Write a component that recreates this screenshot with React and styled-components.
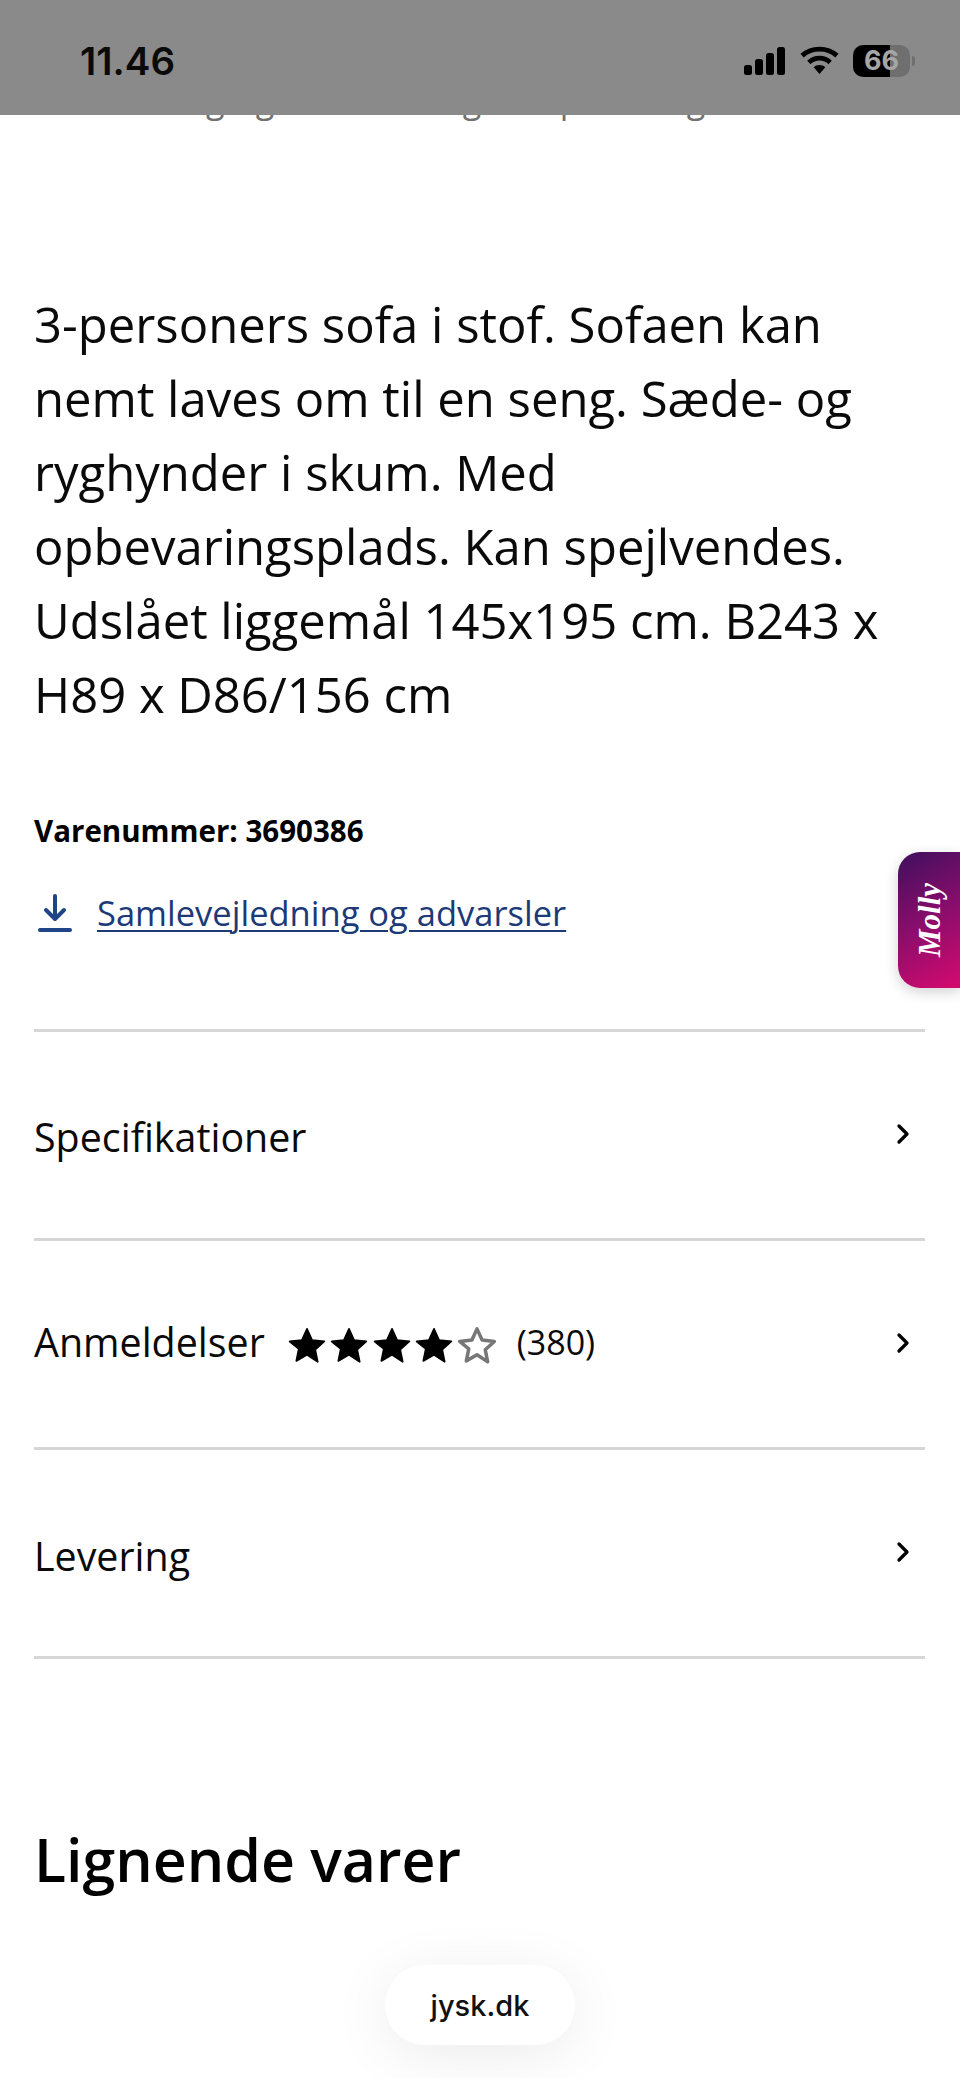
import React from 'react';
import styled, { createGlobalStyle } from 'styled-components';
import { ChevronRight } from 'lucide-react';

const GlobalStyle = createGlobalStyle`
  html, body {
    margin: 0;
    padding: 0;
    background: #fff;
    font-family: 'Open Sans', 'Liberation Sans', sans-serif;
    color: #000;
  }
`;

const Page = styled.div`
  position: relative;
  width: 960px;
  height: 2078px;
  overflow: hidden;
  background: #fff;
`;

const StatusBar = styled.div`
  position: absolute;
  top: 0;
  left: 0;
  right: 0;
  height: 115px;
  background: #8a8a8a;
  display: flex;
  justify-content: space-between;
  align-items: center;
  padding: 6px 45px 0 80px;
  box-sizing: border-box;
`;

const Clock = styled.span`
  font-family: 'Inter', 'Liberation Sans', sans-serif;
  font-size: 38.5px;
  font-weight: 600;
  color: #0a0a0a;
`;

const StatusIcons = styled.div`
  display: flex;
  align-items: center;
  gap: 14px;
`;

const Content = styled.main`
  padding: 0 35px 0 34px;
`;

const ClippedLine = styled.div`
  font-size: 34px;
  line-height: 46px;
  height: 46px;
  margin-top: 77px;
  padding-left: 65px;
  color: #707070;
  word-spacing: 2px;
  white-space: nowrap;
`;

const Description = styled.p`
  margin: 164px 0 0;
  max-width: 865px;
  font-size: 49px;
  line-height: 74px;
  color: #0a0a0a;
`;

const ItemNumber = styled.div`
  margin-top: 80px;
  font-size: 29.5px;
  line-height: 40px;
  font-weight: 700;
`;

const DownloadLink = styled.a`
  display: flex;
  align-items: center;
  gap: 25px;
  margin-top: 39px;
  font-size: 34.5px;
  line-height: 46px;
  color: #1c3a78;
  text-decoration: underline;
  text-decoration-thickness: 2px;
  text-underline-offset: 4px;
`;

const Accordion = styled.div`
  margin-top: 93px;
  border-top: 3px solid #d6d6d6;
`;

const AccordionRow = styled.div`
  display: flex;
  align-items: center;
  justify-content: space-between;
  height: 206px;
  border-bottom: 3px solid #d6d6d6;
  color: #0a0a0a;
  font-size: 39.4px;
`;

const RowLabel = styled.div`
  display: flex;
  align-items: center;
  padding-top: ${({ $drop }) => $drop || 0}px;
  padding-bottom: ${({ $lift }) => $lift || 0}px;
`;

const Stars = styled.div`
  display: flex;
  align-items: center;
  gap: 0.5px;
  margin: 9px 19px 0 21px;
`;

const ReviewCount = styled.span`
  font-size: 34px;
`;

const Arrow = styled(ChevronRight)`
  width: 32px;
  height: 32px;
  stroke-width: 2.5;
  color: #000;
  margin-right: 6px;
  margin-top: -3px;
`;

const SimilarHeading = styled.h2`
  margin: 162px 0 0;
  font-size: 59px;
  line-height: 76px;
  font-weight: 600;
  color: #000;
`;

const MollyTab = styled.div`
  position: absolute;
  top: 852px;
  right: 0;
  width: 62px;
  height: 136px;
  padding-left: 2px;
  box-sizing: border-box;
  border-radius: 22px 0 0 22px;
  background: linear-gradient(150deg, #3f0f5e 0%, #8a0d6c 50%, #d60a6e 100%);
  box-shadow: 0 4px 14px rgba(0, 0, 0, 0.18);
  display: flex;
  align-items: center;
  justify-content: center;
`;

const MollyLabel = styled.span`
  transform: rotate(-90deg);
  color: #fff;
  font-family: 'Liberation Serif', serif;
  font-style: italic;
  font-weight: 700;
  font-size: 31px;
`;

const UrlPill = styled.div`
  position: absolute;
  top: 1965px;
  left: 385px;
  width: 190px;
  height: 80px;
  border-radius: 40px;
  background: #fff;
  box-shadow: 0 10px 60px rgba(0, 0, 0, 0.08);
  display: flex;
  align-items: center;
  justify-content: center;
  font-family: 'Inter', 'Liberation Sans', sans-serif;
  font-size: 29px;
  font-weight: 500;
  color: #111;
`;

const BatteryBody = styled.div`
  width: 57px;
  height: 32px;
  border-radius: 10px;
  overflow: hidden;
  background: linear-gradient(90deg, #000 0 65%, #6f6f6f 65% 100%);
  display: flex;
  align-items: center;
  justify-content: center;
  font-family: 'Inter', 'Liberation Sans', sans-serif;
  font-weight: 700;
  font-size: 27px;
  color: #a6a6a6;
`;

const BatteryCap = styled.div`
  width: 3px;
  height: 10px;
  margin-left: -12px;
  border-radius: 0 3px 3px 0;
  background: #6f6f6f;
`;

function SignalIcon() {
  return (
    <svg width="42" height="28" viewBox="0 0 42 28" fill="#000">
      <rect x="0" y="18" width="8" height="10" rx="2.5" />
      <rect x="11" y="12" width="8" height="16" rx="2.5" />
      <rect x="22" y="6" width="8" height="22" rx="2.5" />
      <rect x="33" y="0" width="8" height="28" rx="2.5" />
    </svg>
  );
}

function WifiIcon() {
  return (
    <svg width="39" height="29" viewBox="0 0 40 30" fill="none" stroke="#000" strokeWidth="5">
      <path d="M2 10 C12 1 28 1 38 10" />
      <path d="M9 17 C15 11 25 11 31 17" />
      <path d="M14 22 L20 29 L26 22 C23 19 17 19 14 22Z" fill="#000" stroke="none" />
    </svg>
  );
}

function Star({ filled }) {
  return (
    <svg width="42" height="42" viewBox="0 0 24 24">
      <path
        d="M12 2.2l2.9 6.4 7 .8-5.2 4.7 1.4 6.9L12 17l-6.1 3.5 1.4-6.9L2.1 9.4l7-.8z"
        fill={filled ? '#000' : 'none'}
        stroke={filled ? '#000' : '#777'}
        strokeWidth={filled ? 1 : 2}
        strokeLinejoin="round"
      />
    </svg>
  );
}

function DownloadIcon() {
  return (
    <svg width="38" height="40" viewBox="0 0 38 40" fill="none" stroke="#1f4488" strokeWidth="4" strokeLinecap="round" strokeLinejoin="round">
      <path d="M21 3v22" />
      <path d="M12 17l9 9 9-9" />
      <path d="M6 37h30" />
    </svg>
  );
}

export default function App() {
  return (
    <Page>
      <GlobalStyle />
      <Content>
        <ClippedLine>levering og afmontering ved placering</ClippedLine>
        <Description>
          3-personers sofa i stof. Sofaen kan nemt laves om til en seng. Sæde- og ryghynder i
          skum. Med opbevaringsplads. Kan spejlvendes. Udslået liggemål 145x195 cm. B243 x H89 x
          D86/156 cm
        </Description>
        <ItemNumber>Varenummer: 3690386</ItemNumber>
        <DownloadLink>
          <DownloadIcon />
          Samlevejledning og advarsler
        </DownloadLink>
        <Accordion>
          <AccordionRow>
            <RowLabel $drop={4}>Specifikationer</RowLabel>
            <Arrow />
          </AccordionRow>
          <AccordionRow>
            <RowLabel $lift={5}>
              Anmeldelser
              <Stars>
                {[true, true, true, true, false].map((filled, i) => (
                  <Star key={i} filled={filled} />
                ))}
              </Stars>
              <ReviewCount>(380)</ReviewCount>
            </RowLabel>
            <Arrow />
          </AccordionRow>
          <AccordionRow>
            <RowLabel $drop={6}>Levering</RowLabel>
            <Arrow />
          </AccordionRow>
        </Accordion>
        <SimilarHeading>Lignende varer</SimilarHeading>
      </Content>
      <StatusBar>
        <Clock>11.46</Clock>
        <StatusIcons>
          <SignalIcon />
          <WifiIcon />
          <BatteryBody>66</BatteryBody>
          <BatteryCap />
        </StatusIcons>
      </StatusBar>
      <MollyTab>
        <MollyLabel>Molly</MollyLabel>
      </MollyTab>
      <UrlPill>jysk.dk</UrlPill>
    </Page>
  );
}
